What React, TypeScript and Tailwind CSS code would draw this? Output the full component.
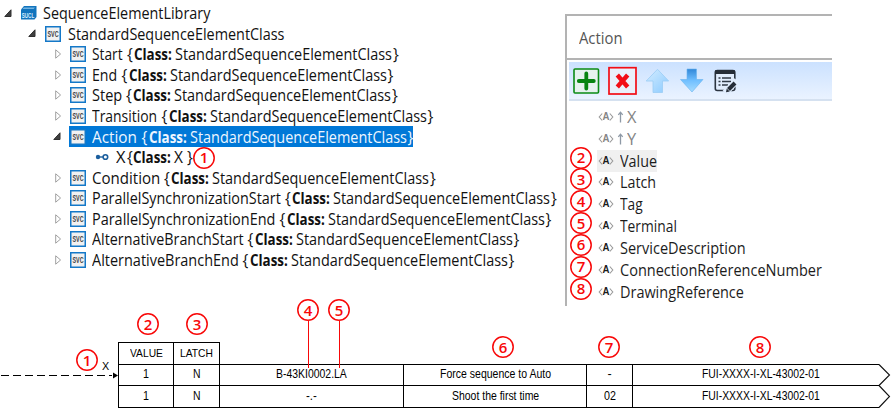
import { useLayoutEffect, useRef, useState } from "react";
import type { ReactNode } from "react";

const UI = "font-['Open_Sans','Noto_Sans',sans-serif]";

// Text condensed or expanded horizontally so that it spans `width` pixels.
function Fit({ width, className = "", children }: { width: number; className?: string; children: ReactNode }) {
  const ref = useRef<HTMLSpanElement>(null);
  const [scale, setScale] = useState(1);
  useLayoutEffect(() => {
    if (ref.current) setScale(width / ref.current.offsetWidth);
  }, [width]);
  return (
    <span className={`block shrink-0 ${className}`} style={{ width }}>
      <span ref={ref} className="inline-block origin-left whitespace-pre" style={{ transform: `scaleX(${scale})` }}>
        {children}
      </span>
    </span>
  );
}

function Badge({ n, className = "" }: { n: number; className?: string }) {
  return (
    <span className={`${UI} grid size-[22px] shrink-0 place-items-center text-[15px] leading-none font-semibold text-[#f80808] ${className}`}>
      <svg width="22" height="22" viewBox="0 0 22 22" className="col-start-1 row-start-1">
        <circle cx="11" cy="11" r="10.2" fill="none" stroke="currentColor" strokeWidth="1.5" />
      </svg>
      <span className="col-start-1 row-start-1">{n}</span>
    </span>
  );
}

function SvcIcon() {
  return (
    <svg width="16" height="16" viewBox="0 0 16 16" className="shrink-0 overflow-visible">
      <rect x="0.75" y="0.75" width="14.5" height="14.5" fill="#f1f1f1" stroke="#1478c8" strokeWidth="1.5" />
      <text x="2.5" y="11.4" textLength="11" lengthAdjust="spacingAndGlyphs" fontSize="9" fontWeight="700" fontFamily="Liberation Sans" fill="#404040">
        SVC
      </text>
    </svg>
  );
}

function LibraryIcon() {
  return (
    <svg width="16" height="14" viewBox="0 0 16 14" className="shrink-0 overflow-visible">
      <path d="M3 0H15.5V11L13.5 13.5H0V3.5Z" fill="#1274bd" />
      <path d="M2.8 1.5H14L12.6 3H1.6Z" fill="#73b4e2" />
      <text x="0.8" y="11.7" textLength="12.4" lengthAdjust="spacingAndGlyphs" fontSize="8" fontWeight="700" fontFamily="Liberation Sans" fill="#d9efff">
        SUCL
      </text>
    </svg>
  );
}

function Expanded() {
  return (
    <svg width="8" height="9" viewBox="0 0 8 9" className="shrink-0">
      <path d="M7 .8V7.5H.8Z" fill="#404040" stroke="#303030" />
    </svg>
  );
}

function Collapsed() {
  return (
    <svg width="7" height="10" viewBox="0 0 7 10" className="shrink-0">
      <path d="M.7 .8V9.2L5.6 5Z" fill="#fff" stroke="#a0a0a0" />
    </svg>
  );
}

function ClassTail() {
  return (
    <span className="flex">
      <Fit width={6} className="mr-px">{"{"}</Fit>
      <Fit width={38} className="mr-[3px] font-bold">Class:</Fit>
      <Fit width={217}>StandardSequenceElementClass</Fit>
      <Fit width={6} className="ml-px">{"}"}</Fit>
    </span>
  );
}

const before = [
  { name: "Start", w: 31 },
  { name: "End", w: 25.5 },
  { name: "Step", w: 30 },
  { name: "Transition", w: 65.5 },
];
const after = [
  { name: "Condition", w: 68 },
  { name: "ParallelSynchronizationStart", w: 189 },
  { name: "ParallelSynchronizationEnd", w: 183.5 },
  { name: "AlternativeBranchStart", w: 151.5 },
  { name: "AlternativeBranchEnd", w: 146.5 },
];

function Node({ name, w }: { name: string; w: number }) {
  return (
    <div className="flex h-[20.56px] items-center pl-[55px]">
      <Collapsed />
      <span className="w-2" />
      <SvcIcon />
      <Fit width={w} className="mr-1 ml-1.5">{name}</Fit>
      <ClassTail />
    </div>
  );
}

function Tree() {
  return (
    <div className={`${UI} w-[565px] pt-[3px] text-[15.5px] leading-5 text-[#111]`}>
      <div className="flex h-[20.56px] items-center pl-1">
        <Expanded />
        <span className="w-[9px]" />
        <LibraryIcon />
        <Fit width={167} className="ml-[6px]">SequenceElementLibrary</Fit>
      </div>
      <div className="flex h-[20.56px] items-center pl-7">
        <Expanded />
        <span className="w-[9px]" />
        <SvcIcon />
        <Fit width={216.5} className="ml-[6.5px]">StandardSequenceElementClass</Fit>
      </div>
      {before.map((r) => <Node key={r.name} {...r} />)}
      <div className="flex h-[20.56px] items-center pl-[53px]">
        <Expanded />
        <div className="ml-2 flex h-[20.5px] w-[344px] items-center bg-[#0078d7] pl-px text-[#eef6ff]">
          <SvcIcon />
          <Fit width={45.5} className="mr-1 ml-1.5">Action</Fit>
          <ClassTail />
        </div>
      </div>
      <div className="flex h-[20.56px] items-center pl-[95px]">
        <svg width="14" height="8" viewBox="0 0 14 8" className="shrink-0">
          <circle cx="3" cy="4" r="2.2" fill="#1c5f9e" />
          <path d="M3 4H8" stroke="#1c5f9e" strokeWidth="1.4" />
          <circle cx="10.4" cy="4" r="2.3" fill="#fff" stroke="#1c5f9e" strokeWidth="1.6" />
        </svg>
        <Fit width={9.5} className="ml-[7px]">X</Fit>
        <Fit width={6} className="ml-[1.5px]">{"{"}</Fit>
        <Fit width={38} className="font-bold">Class:</Fit>
        <Fit width={19} className="ml-[3px]">{"X }"}</Fit>
        <Badge n={1} className="mt-px" />
      </div>
      {after.map((r) => <Node key={r.name} {...r} />)}
    </div>
  );
}

function Toolbar() {
  return (
    <div className="mt-[2px] ml-[2px] flex h-[39px] items-center border-b-2 border-[#d5e1f0] bg-linear-to-b from-[#cbe1ff] to-[#eaf3ff] pl-1">
      <svg width="180" height="30" viewBox="0 0 180 30" className="shrink-0">
        <rect x="1" y="3" width="24.5" height="24" rx="1" fill="#e6f2ee" stroke="#0b8a14" strokeWidth="1.6" />
        <path d="M13.3 7.5V22.5M5.8 15H20.8" stroke="#078410" strokeWidth="3.8" strokeLinecap="round" />
        <rect x="36" y="1.7" width="27" height="26.3" fill="#e9f0fb" stroke="#f20d16" strokeWidth="1.7" />
        <path d="M44.3 9L54.7 21M54.7 9L44.3 21" stroke="#f20d16" strokeWidth="4.4" />
        <defs>
          <linearGradient id="up" x1="0" y1="0" x2="1" y2="1">
            <stop offset="0" stopColor="#d4ecff" />
            <stop offset="1" stopColor="#8ccbff" />
          </linearGradient>
          <linearGradient id="down" x1="0" y1="0" x2="0" y2="1">
            <stop offset="0" stopColor="#3187d8" />
            <stop offset="0.5" stopColor="#70bfff" />
            <stop offset="1" stopColor="#a6dcff" />
          </linearGradient>
        </defs>
        <path d="M84.5 3.3L95.7 15H89.5V26.5H80V15H73.2Z" fill="url(#up)" stroke="#9bcdf5" strokeWidth=".8" />
        <path d="M114 3H123.5V13.5H130L119 26L107.5 13.5H114Z" fill="url(#down)" stroke="#69b3ee" strokeWidth=".6" />
        <rect x="142.3" y="4.5" width="19.5" height="20" rx="2" fill="#e1edfd" stroke="#2b3440" strokeWidth="1.6" />
        <path d="M142 4.3H162V8H142Z" fill="#252d37" />
        <path d="M145.5 12H147.5M145.5 15.5H147.5M145.5 19H147.5M149 12H158M149 15.5H158M149 19H155" stroke="#303a46" strokeWidth="1.5" />
        <path d="M152 27L164 14.5" stroke="#e1edfd" strokeWidth="6.5" />
        <path d="M155.5 23.5L162 17" stroke="#252d37" strokeWidth="4" />
        <path d="M153.7 22.5L153 26.2L156.8 25.4Z" fill="#252d37" />
      </svg>
    </div>
  );
}

function AttributeIcon() {
  return (
    <svg width="16" height="12" viewBox="0 0 16 12" className="shrink-0 overflow-visible">
      <path d="M4.2 2.5L1.2 6L4.2 9.5M11.8 2.5L14.8 6L11.8 9.5" fill="none" stroke="#999" strokeWidth="1.1" />
      <text x="4.6" y="9.4" textLength="7" lengthAdjust="spacingAndGlyphs" fontSize="10" fontWeight="700" fontFamily="Liberation Sans" fill="currentColor">
        A
      </text>
    </svg>
  );
}

const attributes = [
  { name: "Value", w: 37 },
  { name: "Latch", w: 36 },
  { name: "Tag", w: 23 },
  { name: "Terminal", w: 57 },
  { name: "ServiceDescription", w: 125.5 },
  { name: "ConnectionReferenceNumber", w: 201.5 },
  { name: "DrawingReference", w: 124 },
];

function Panel() {
  return (
    <div className={`${UI} mt-[14px] h-[292px] w-[267px] border-t-2 border-l-2 border-[#b3b3b3] text-[15.5px] leading-5`}>
      <div className="flex h-[42px] items-center pl-3 text-[#555]">
        <Fit width={44} className="mt-px">Action</Fit>
      </div>
      <div className="h-[248px] border-t-2 border-[#b3b3b3]">
        <Toolbar />
        <div className="pt-[5px] pl-[3px] text-[#1c1c1c]">
          {["X", "Y"].map((axis) => (
            <div key={axis} className="flex h-[21.85px] items-center pl-[28px] text-[#858585]">
              <AttributeIcon />
              <svg width="7" height="12" viewBox="0 0 7 12" className="ml-[3px] shrink-0">
                <path d="M3.5 11.5V2M1.3 3.8L3.5 1.2L5.7 3.8" fill="none" stroke="#8e99a6" strokeWidth="1.3" />
              </svg>
              <Fit width={9.5} className="ml-[3px]">{axis}</Fit>
            </div>
          ))}
          {attributes.map(({ name, w }, i) => (
            <div key={name} className="flex h-[21.85px] items-center">
              <Badge n={i + 2} className="-mt-[6px]" />
              <div className={`ml-[5px] flex h-[21.85px] items-center pl-px ${i === 0 ? "bg-[#f0f0f0]" : ""}`}>
                <AttributeIcon />
                <Fit width={w} className="ml-[6px]">{name}</Fit>
              </div>
            </div>
          ))}
        </div>
      </div>
    </div>
  );
}

function Cell({ text, w, className }: { text: string; w: number; className: string }) {
  return (
    <div className={`flex shrink-0 items-center justify-center border-r border-black pb-[2px] ${className}`}>
      <Fit width={w}>{text}</Fit>
    </div>
  );
}

interface Step {
  tag: [string, number];
  text: [string, number];
  conn: [string, number];
}
const steps: Step[] = [
  { tag: ["B-43KI0002.LA", 71], text: ["Force sequence to Auto", 111], conn: ["-", 4] },
  { tag: ["-.-", 11], text: ["Shoot the first time", 87], conn: ["02", 12] },
];

function SequenceTable() {
  return (
    <div className="relative mt-[36px] ml-[118px] w-[775px] font-['Liberation_Sans',Arial,sans-serif] text-[12.5px] leading-4 text-black">
      <div className="flex h-[22px] w-[102px] border-t border-l border-black text-[11.5px]">
        <Cell text="VALUE" w={33} className="w-[55px]" />
        <Cell text="LATCH" w={33} className="w-[46px]" />
      </div>
      {steps.map((s, i) => (
        <div key={i} className={`flex border-l border-black ${i === 0 ? "h-[21px]" : "h-[22px]"}`}>
          <div className="flex w-[760px] shrink-0 border-t border-black">
            <Cell text="1" w={6} className="w-[55px]" />
            <Cell text="N" w={7.5} className="w-[46px]" />
            <Cell text={s.tag[0]} w={s.tag[1]} className="w-[184px]" />
            <Cell text={s.text[0]} w={s.text[1]} className="w-[183px]" />
            <Cell text={s.conn[0]} w={s.conn[1]} className="w-[46px]" />
            <div className="flex grow items-center pb-[2px] pl-[69px]">
              <Fit width={118}>FUI-XXXX-I-XL-43002-01</Fit>
            </div>
          </div>
          <svg width="12" height="23" viewBox="0 0 12 23" className="shrink-0 overflow-visible">
            <path d={i === 0 ? "M0 .5L10.5 11L0 21.5" : "M0 .5L10.5 11.5L0 22.5"} fill="none" stroke="#111" strokeWidth="1.1" />
          </svg>
        </div>
      ))}
      <div className="h-px w-[761px] bg-black" />

      {/* Incoming connection, left of the table */}
      <svg width="118" height="10" viewBox="0 0 118 10" className="absolute top-[28px] -left-[118px]">
        <path d="M1 5.5H112" stroke="#000" strokeDasharray="8 4" />
        <path d="M113 2.5L118 5.5L113 8.5Z" fill="#000" />
      </svg>
      <span className="absolute top-[16px] -left-[16px]">
        <Fit width={7.5} className="text-[11.5px]">X</Fit>
      </span>

      {/* Numbered callouts */}
      <Badge n={1} className="absolute top-[7px] -left-[42px]" />
      <Badge n={2} className="absolute -top-[29px] left-[19px]" />
      <Badge n={3} className="absolute -top-[29px] left-[68px]" />
      <Badge n={4} className="absolute -top-[43px] left-[179px]" />
      <Badge n={5} className="absolute -top-[43px] left-[210px]" />
      <Badge n={6} className="absolute -top-[6px] left-[374px]" />
      <Badge n={7} className="absolute -top-[6px] left-[480px]" />
      <Badge n={8} className="absolute -top-[6px] left-[631px]" />
      <div className="absolute -top-[21px] left-[190px] h-[47px] w-px bg-[#f80808]" />
      <div className="absolute -top-[21px] left-[221px] h-[47px] w-px bg-[#f80808]" />
    </div>
  );
}

export default function App() {
  return (
    <div className="h-[413px] w-[893px] overflow-hidden bg-white">
      <div className="flex h-[306px]">
        <Tree />
        <Panel />
      </div>
      <SequenceTable />
    </div>
  );
}
